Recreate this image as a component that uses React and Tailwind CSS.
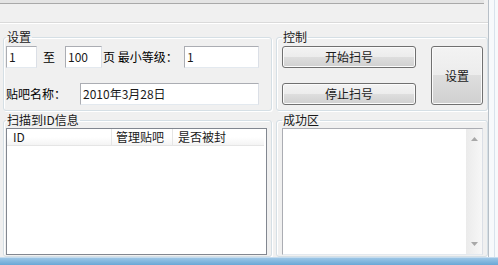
import React from 'react';

const BTN =
  'rounded-[3px] border border-[#707070] bg-[linear-gradient(to_bottom,#f3f3f3_0%,#ececec_50%,#dedede_50%,#d0d0d0_100%)] shadow-[inset_0_0_0_1px_#fbfbfb] flex items-center justify-center text-[12px] text-[#1a1a1a]';

const BOX = 'border border-[#abadb3] border-r-[#dbdfe6] border-b-[#e3e9ef] bg-white';

function Field({ className = '', children }) {
  return (
    <div className={`${BOX} h-[22px] flex items-center pl-[2px] text-[12px] leading-none text-[#1a1a1a] ${className}`}>
      {children}
    </div>
  );
}

function GroupBox({ title, className = '', children }) {
  return (
    <fieldset className={`border border-[#d5dfe5] rounded-[3px] shadow-[inset_1px_1px_0_#fff,1px_1px_0_#fff] ${className}`}>
      <legend className="text-[12px] leading-[14px] text-[#1a1a1a] px-[1px] ml-0">{title}</legend>
      {children}
    </fieldset>
  );
}

function Arrow({ up }) {
  return (
    <svg width="7" height="4" viewBox="0 0 7 4">
      <path d={up ? 'M0 4 L3.5 0 L7 4 Z' : 'M0 0 L3.5 4 L7 0 Z'} fill="#a8a8a8" />
    </svg>
  );
}

export default function App() {
  return (
    <div className="w-[498px] h-[265px] bg-[#f0f0f0] flex flex-col overflow-hidden font-['Noto_Sans_CJK_SC','Liberation_Sans',sans-serif]">
      <div className="flex flex-1 min-h-0">
        <div className="w-[488px] flex flex-col">
          {/* top strip */}
          <div className="h-[4px] w-[484px] bg-[#e4e4e4] border-b border-[#a9a9a9]" />
          <div className="h-[19px] border-b border-[#dadada] shadow-[0_1px_0_#fff]" />

          {/* row 1 */}
          <div className="flex gap-[4px] pl-[3px] mt-[7px]">
            <GroupBox title="设置" className="w-[269px] pl-[2px] pb-[5px]">
              <div className="flex items-center mt-[2px]">
                <Field className="w-[31px]">1</Field>
                <span className="ml-[6px] text-[12px]">至</span>
                <Field className="w-[37px] ml-[10px]">100</Field>
                <span className="w-[82px] pl-[1px] text-[12px] whitespace-pre">页 最小等级：</span>
                <Field className="w-[75px]">1</Field>
              </div>
              <div className="flex items-center mt-[15px]">
                <span className="w-[74px] text-[12px]">贴吧名称：</span>
                <Field className="w-[179px]">2010年3月28日</Field>
              </div>
            </GroupBox>

            <GroupBox title="控制" className="w-[212px] pl-[5px] pb-[5px]">
              <div className="flex mt-[2px] gap-[15px]">
                <div className="flex flex-col gap-[15px] w-[134px]">
                  <div className={`${BTN} h-[22px]`}>开始扫号</div>
                  <div className={`${BTN} h-[22px]`}>停止扫号</div>
                </div>
                <div className={`${BTN} w-[52px] h-[59px]`}>设置</div>
              </div>
            </GroupBox>
          </div>

          {/* row 2 */}
          <div className="flex gap-[4px] pl-[3px] mt-[2px]">
            <GroupBox title="扫描到ID信息" className="w-[269px] pl-[2px] pb-[1px]">
              <div className="mt-[1px] w-[261px] h-[127px] border border-[#828790] bg-white">
                <div className="flex h-[17px] w-[257px] border-b border-[#e5e5e5] bg-[linear-gradient(to_bottom,#ffffff_0%,#ffffff_50%,#f4f4f4_100%)] text-[12px] leading-[16px] text-[#1a1a1a]">
                  <div className="w-[105px] pl-[6px] border-r border-[#e5e5e5]">ID</div>
                  <div className="w-[61px] pl-[4px] border-r border-[#e5e5e5]">管理贴吧</div>
                  <div className="flex-1 pl-[5px]">是否被封</div>
                </div>
              </div>
            </GroupBox>

            <GroupBox title="成功区" className="w-[212px] pl-[5px] pb-[1px]">
              <div className={`${BOX} border-[#abadb3] mt-[1px] w-[201px] h-[127px] flex justify-end`}>
                <div className="w-[16px] h-full bg-[linear-gradient(to_right,#ebebeb,#f7f7f7)] flex flex-col items-center justify-between py-[8px]">
                  <Arrow up />
                  <Arrow />
                </div>
              </div>
            </GroupBox>
          </div>
        </div>

        {/* window edge */}
        <div className="flex-1 border-l border-[#b7bfc7] bg-[#f7f9fb] flex">
          <div className="w-[6px] border-r border-[#d8e2ec]" />
        </div>
      </div>

      {/* bottom blue strip */}
      <div className="h-[8px] border-t border-[#c4dcef] bg-[linear-gradient(to_bottom,#9cc6e6,#6aa7d6)]" />
    </div>
  );
}
